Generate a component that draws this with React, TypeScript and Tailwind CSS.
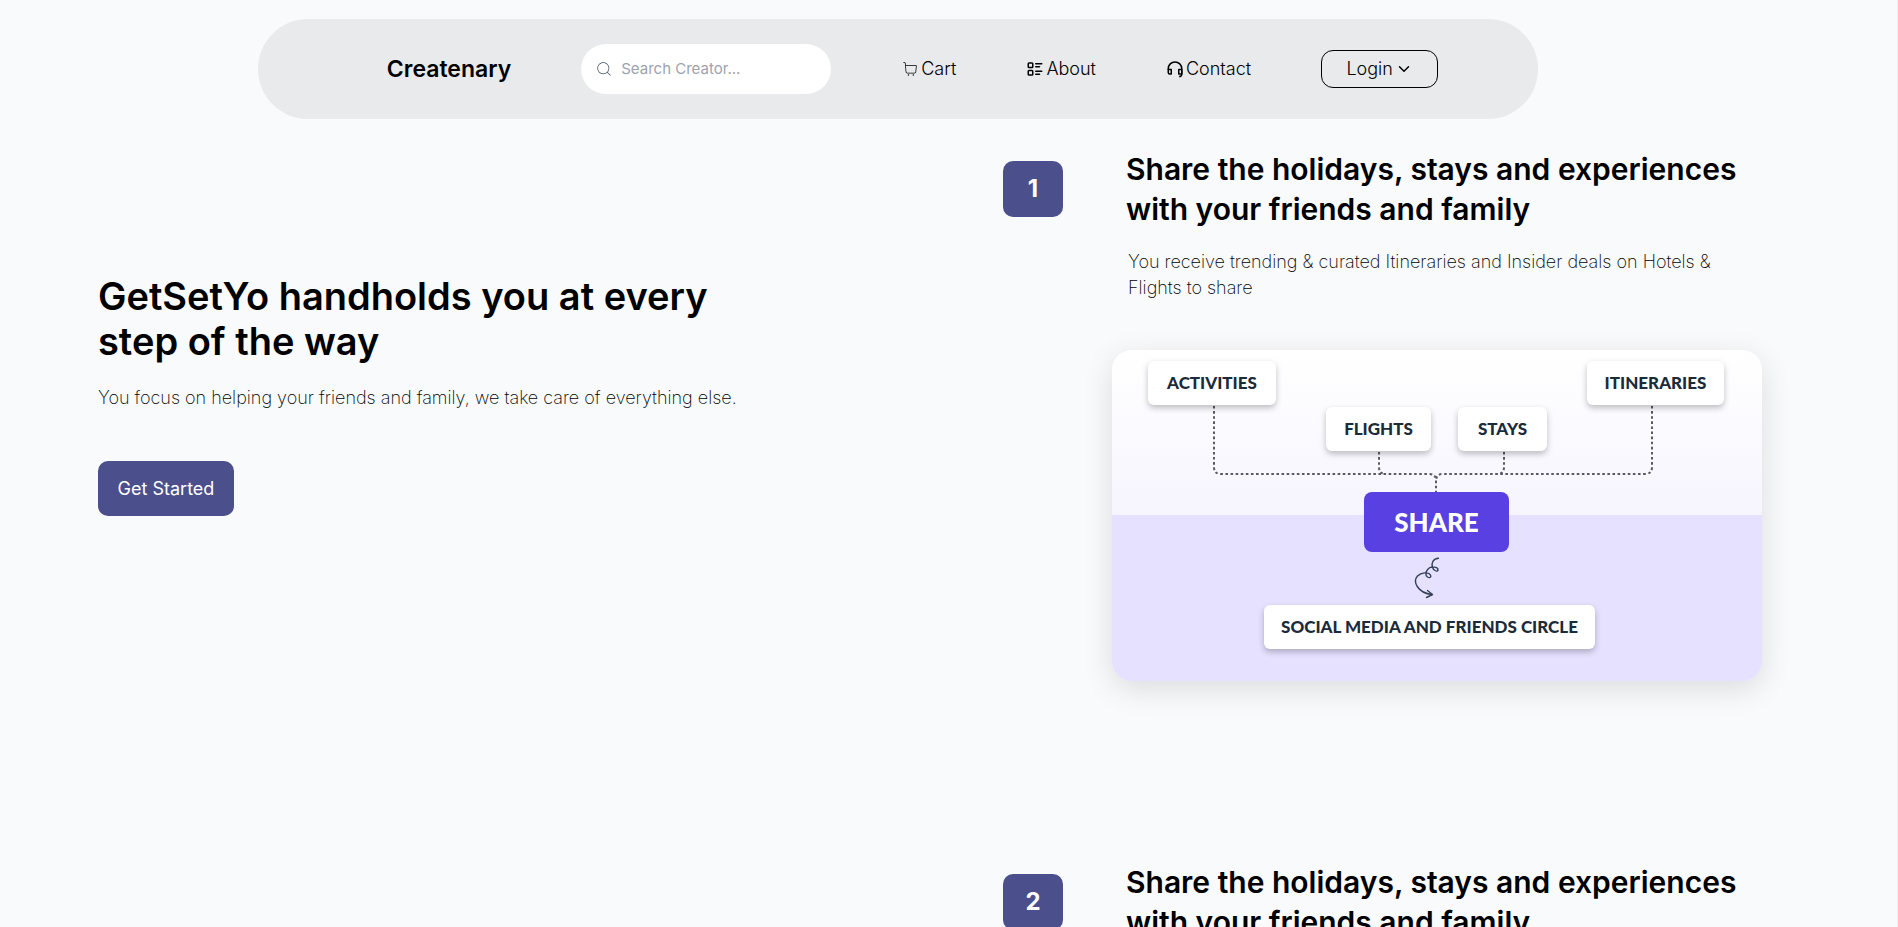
import { CiSearch, CiShoppingCart } from "react-icons/ci";
import { TbListDetails } from "react-icons/tb";
import { ChevronDown } from "lucide-react";

function HeadsetIcon() {
  return (
    <svg
      className="size-[18px]"
      viewBox="0 0 24 24"
      fill="none"
      stroke="currentColor"
      strokeWidth="2"
      strokeLinejoin="round"
      aria-hidden="true"
    >
      <path d="M3 13V11.500A9 9 0 0 1 21 11.500V18.500Q21 22 17.500 22" />
      <path d="M3 12.500H7V18.500H5Q3 18.500 3 16.500Z" />
      <path d="M21 12.500H17V18.500H21Z" />
    </svg>
  );
}

const links = [
  { label: "Cart", icon: <CiShoppingCart className="size-[18px]" /> },
  { label: "About", icon: <TbListDetails className="size-[18px]" /> },
  { label: "Contact", icon: <HeadsetIcon /> },
];

function Navbar() {
  return (
    <header className="flex justify-center pr-[102px] pt-[19px]">
      <nav className="flex h-[100px] w-full max-w-[1280px] items-center justify-center gap-[70px] rounded-[50px] bg-[#e9eaeb] pl-[30px]">
        <a href="#" className="text-[23px] font-semibold">Createnary</a>
        <label className="flex h-[50px] w-[250px] items-center gap-2 rounded-[25px] bg-white px-3.5">
          <CiSearch className="size-[18px] shrink-0 text-[#4b5563]" />
          <input
            type="text"
            aria-label="Search Creator"
            placeholder="Search Creator..."
            className="w-full min-w-0 bg-transparent text-[15px] outline-none placeholder:text-[#9ca3af]"
          />
        </label>
        {links.map((link) => (
          <a key={link.label} href="#" className="flex items-center gap-0.5 text-lg font-light">
            {link.icon}
            {link.label}
          </a>
        ))}
        <button
          type="button"
          className="flex h-[38px] w-[117px] items-center justify-center gap-0.5 rounded-xl border border-black text-lg font-light"
        >
          Login
          <ChevronDown className="size-[18px]" />
        </button>
      </nav>
    </header>
  );
}

const nodeClass =
  "absolute flex h-11 items-center justify-center rounded-md bg-white text-[17px] font-black text-[#1b2b3a] shadow-[0_3px_6px_rgba(0,0,0,0.25)]";

function ShareDiagram() {
  return (
    <div className="relative h-[331px] w-[650px] overflow-hidden rounded-[20px] bg-linear-to-b from-white to-[#eeebff] font-[Lato,sans-serif]">
      <div className="absolute inset-x-0 bottom-0 h-[166px] bg-[#e6e1ff]" />
      <svg
        className="absolute inset-0"
        width="650"
        height="331"
        viewBox="0 0 650 331"
        fill="none"
        stroke="#5a5a66"
        strokeWidth="2"
        strokeDasharray="2.6 2.5"
        aria-hidden="true"
      >
        <path d="M102 56V117Q102 124 109 124H317Q324 124 324 131V142" />
        <path d="M540 56V117Q540 124 533 124H331Q324 124 324 131" />
        <path d="M267 102V117Q267 124 274 124" />
        <path d="M392 102V117Q392 124 385 124" />
        <g stroke="#334155" strokeWidth="1.4" strokeDasharray="none" strokeLinecap="round" strokeLinejoin="round">
          <path d="M326.500 208.300C321 208.500 319.500 213 320.300 217C321.500 220.500 325.500 222.500 326 220C326.300 217.500 320 215.500 316.500 218.500C313.500 221.500 313 225.500 315.500 227C318 228.500 319.500 227 318.500 225C316.500 221.500 309 222.500 305.500 226C300.500 231.500 305.500 243 320 244.500" />
          <path d="M315.500 240.500L320.500 244.500L314.500 247.500" />
        </g>
      </svg>
      <span className={`${nodeClass} left-9 top-[11px] w-32`}>ACTIVITIES</span>
      <span className={`${nodeClass} left-[214px] top-[57px] w-[105px]`}>FLIGHTS</span>
      <span className={`${nodeClass} left-[346px] top-[57px] w-[89px]`}>STAYS</span>
      <span className={`${nodeClass} left-[475px] top-[11px] w-[137px]`}>ITINERARIES</span>
      <span className="absolute left-[252px] top-[142px] flex h-[60px] w-[145px] items-center justify-center rounded-lg bg-[#5840e2] text-[26px] font-black text-white">
        SHARE
      </span>
      <span className={`${nodeClass} left-[152px] top-[255px] w-[331px]`}>SOCIAL MEDIA AND FRIENDS CIRCLE</span>
    </div>
  );
}

function Step({ number }: { number: number }) {
  return (
    <section className="flex h-[713px] items-start">
      <span className="mt-3 flex h-14 w-[60px] shrink-0 items-center justify-center rounded-[10px] bg-[#4b508d] text-2xl font-bold text-white">
        {number}
      </span>
      <div className="ml-[49px]">
        <h2 className="w-[640px] pl-3.5 text-[30px] leading-10 font-semibold">
          Share the holidays, stays and experiences with your friends and family
        </h2>
        <p className="mt-5 w-[630px] pl-4 text-lg leading-[26px] font-extralight">
          You receive trending &amp; curated Itineraries and Insider deals on Hotels &amp; Flights to share
        </p>
        <div className="mt-[49px] w-fit rounded-[20px] shadow-[0_8px_30px_rgba(0,0,0,0.12)]">
          <ShareDiagram />
        </div>
      </div>
    </section>
  );
}

export default function App() {
  return (
    <div className="min-h-screen border-r border-[#eceef0] bg-[#f8fafc] font-[Inter,sans-serif] text-black">
      <Navbar />
      <main className="flex items-start pl-[98px]">
        <section className="w-[905px] shrink-0 pt-[155px]">
          <h1 className="max-w-[640px] text-[38px] leading-[45px] font-semibold">
            GetSetYo handholds you at every step of the way
          </h1>
          <p className="mt-5 text-lg leading-7 font-extralight">
            You focus on helping your friends and family, we take care of everything else.
          </p>
          <button
            type="button"
            className="mt-[49px] h-[55px] w-[136px] rounded-[10px] bg-[#4b508d] text-lg text-white"
          >
            Get Started
          </button>
        </section>
        <div className="pt-[30px]">
          <Step number={1} />
          <Step number={2} />
        </div>
      </main>
    </div>
  );
}
